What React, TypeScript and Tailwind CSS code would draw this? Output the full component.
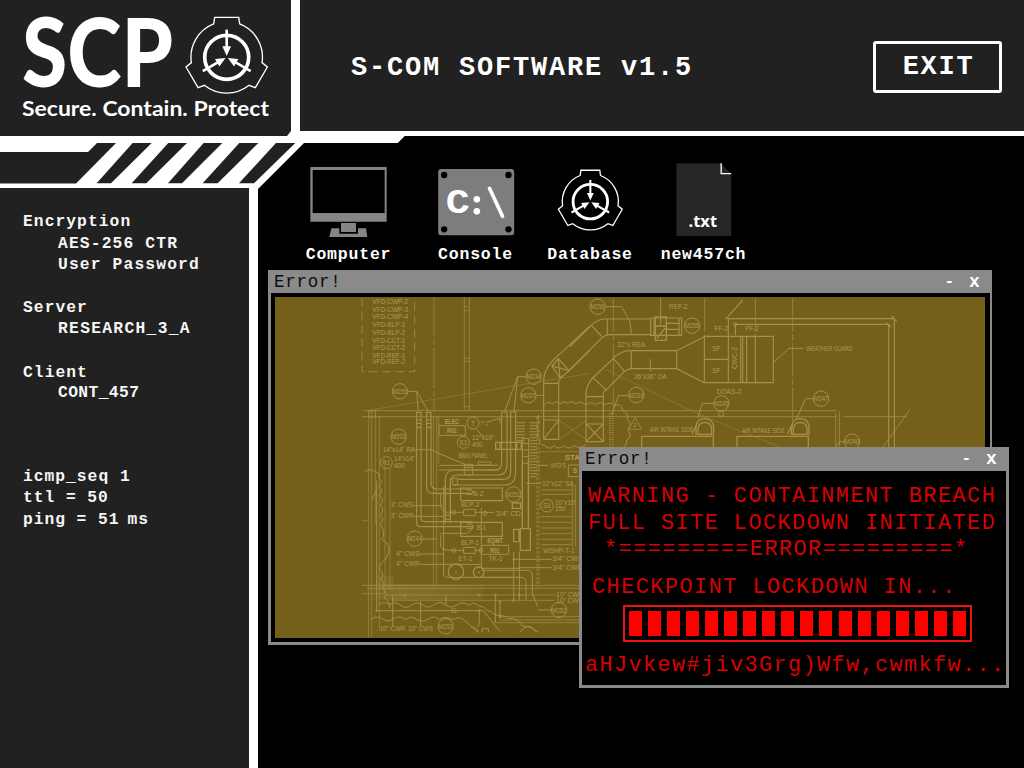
import React from "react";

const MONO = "font-['Liberation_Mono','Courier_New',monospace]";

function Emblem({ thin = 4 }: { thin?: number }) {
  return (
    <g fill="none" stroke="#fff">
      <path
        strokeWidth={thin}
        d="M-36-120L36-120L39-100A107 107 0 0 1 106 16L122 29L86 91L67 84A107 107 0 0 1-67 84L-86 91L-122 29L-106 16A107 107 0 0 1-39-100Z"
      />
      <circle r="66" strokeWidth="11" />
      {[0, 120, 240].map((a) => (
        <g key={a} transform={`rotate(${a})`}>
          <path d="M0-83V-28" strokeWidth="8" />
          <path d="M-13-33H13L0-4Z" fill="#fff" stroke="none" />
        </g>
      ))}
    </g>
  );
}

function Logo() {
  return (
    <svg className="block h-[136px] w-[291px]" viewBox="0 0 291 136" fill="#fff">
      <text x="22" y="87" fontFamily="Lato, sans-serif" fontWeight="900" fontSize="95" textLength="151" lengthAdjust="spacingAndGlyphs">
        SCP
      </text>
      <text x="22" y="115.5" fontFamily="Lato, sans-serif" fontWeight="700" fontSize="21" textLength="247" lengthAdjust="spacingAndGlyphs">
        Secure. Contain. Protect
      </text>
      <g transform="translate(226.7 57.3) scale(.3333)">
        <Emblem />
      </g>
    </svg>
  );
}

function StripeBand() {
  return (
    <svg className="pointer-events-none absolute left-0 top-[131px] h-[64px] w-[410px]" viewBox="0 131 410 64">
      <path fill="#fff" d="M0 136H287L291 131H410L398 143H304L258 189V195H249V188H0Z" />
      <path fill="#000" d="M410 136H405L398 143H410Z" />
      <path fill="#212121" d="M0 152H88L97 143H116L76 183.5H0Z" />
      <g fill="#212121" transform="scale(.3333)">
        <path d="M398 429H455L333 550H290Z" />
        <path d="M505 429H561L439 550H395Z" />
        <path d="M611 429H667L546 550H504Z" />
        <path d="M718 429H775L653 550H608Z" />
        <path d="M828 429H886L762 550H717Z" />
      </g>
    </svg>
  );
}

type TP = { x: number; y: number; s?: number; w?: number; children: React.ReactNode; b?: boolean; r?: number };
function T({ x, y, s = 21, w, children, b, r }: TP) {
  return (
    <text
      x={x}
      y={y}
      fontSize={s}
      textLength={w}
      lengthAdjust="spacingAndGlyphs"
      fontWeight={b ? 700 : 400}
      fill="#b29b52"
      stroke="none"
      transform={r ? `rotate(${r} ${x} ${y})` : undefined}
    >
      {children}
    </text>
  );
}

function Bubble({ x, y, t, r = 23 }: { x: number; y: number; t: string; r?: number }) {
  const w = t.length > 2 ? 42 : t.length * 12;
  return (
    <g>
      <circle cx={x} cy={y} r={r} />
      <T x={x - w / 2} y={y + 8} w={w}>{t}</T>
    </g>
  );
}

const vfd = ["VFD-CWP-2", "VFD-CWP-3", "VFD-CWP-4", "VFD-BLP-1", "VFD-BLP-2", "VFD-CCT-1", "VFD-CCT-2", "VFD-REF-1", "VFD-REF-2"];
const vfdY = [43, 66, 88, 110, 136, 158, 181, 203, 223];

function Blueprint() {
  return (
    <svg
      className="block h-[341px] w-[710px] bg-[#74601b]"
      viewBox="275 297 710 341"
      fill="none"
      stroke="#a68f46"
      strokeWidth="3"
      fontFamily="'Liberation Sans', Arial, sans-serif"
    >
      <defs>
        <linearGradient id="haze">
          <stop offset="0" stopColor="#a68f46" stopOpacity="0" />
          <stop offset=".3" stopColor="#a68f46" stopOpacity=".35" />
          <stop offset="1" stopColor="#a68f46" stopOpacity=".12" />
        </linearGradient>
      </defs>

      <g transform="translate(270 290) scale(.33333)">
        {vfd.map((v, i) => (
          <T key={v} x={307} y={vfdY[i]} w={v.includes("CWP") ? 107 : 99}>{v}</T>
        ))}
        <path strokeDasharray="26 14" opacity=".8" d="M276 25V245H434V25" />
        <path strokeDasharray="120 8 18 8" opacity=".7" d="M492 20V365" />
        <path opacity=".7" d="M583 20V360M598 20V360M583 50H598M583 62H598M583 205H598M583 214H598M583 350H598" />
        <path opacity=".45" d="M300 360L960 250M1010 240L1280 370L1600 500" />
        <Bubble x={390} y={304} t="M235" />
        <path d="M413 304H440L445 362M440 304L474 362" />
        <Bubble x={791} y={260} t="M234" />
        <path d="M768 260H743L704 365M743 260L732 365" />
        <Bubble x={775} y={316} t="M237" />
        <path d="M798 316H820" />
        <path strokeWidth="4" opacity=".65" d="M280 362H1700M275 380H1700" />
        <path opacity=".6" d="M296 360V1070M305 360V1040M316 362V700M328 380V1020M296 362H316V382H296Z" />
        <path strokeWidth="3.5" d="M440 365V700Q440 710 452 710H610M453 365V685Q455 695 466 695H605M470 365V590Q470 610 490 610H605M483 365V580Q485 597 500 597H605M440 367H453M470 367H483M440 390H453M440 400H453M440 412H453M470 390H483M470 400H483M470 412H483" />
        <path opacity=".65" d="M490 380V890M500 380V890M506 380V520" />
        <path strokeWidth="3.5" d="M695 366H711V525Q710 555 685 555H560Q541 557 541 580V690M722 366H737V550Q735 585 705 585H550M695 366V520Q694 540 675 540H550Q526 543 526 570V700M722 366V545Q722 568 700 568H562" />
        <T x={524} y={402} w={43} b>ELEC</T>
        <path d="M507 407H586V436H507Z" />
        <T x={531} y={428} w={29} b>R02</T>
        <Bubble x={609} y={399} t="T" r={18} />
        <T x={632} y={408} w={28}>7'-1"</T>
        <path d="M618 416L642 442M655 395L690 385V400" />
        <Bubble x={386} y={440} t="M203" />
        <T x={338} y={486} w={98}>14"x14" RA</T>
        <path d="M436 479H480L585 523" />
        <Bubble x={349} y={518} t="R1" r={18} />
        <T x={372} y={513} w={63}>14"x14"</T>
        <T x={372} y={533} w={33}>400</T>
        <Bubble x={580} y={457} t="S1" r={18} />
        <T x={606} y={450} w={67}>12"x10"</T>
        <T x={606} y={472} w={31}>400</T>
        <T x={566} y={503} w={88}>BMS PANEL</T>
        <path d="M625 516H662V525H625ZM507 526H685M507 540H685M583 523H608V555H583ZM583 532H608" />
        <path strokeWidth="4" d="M677 457H754V478H677ZM690 457V478M740 457V478" />
        <path d="M757 446H776V700M757 446V700M757 460H776M757 480H776M757 500H776M757 520H776" />
        <path strokeWidth="26" strokeDasharray="3 6" d="M752 397V455" />
        <path strokeWidth="22" strokeDasharray="3 6" d="M790 397V565" />
        <path strokeDasharray="8 5" opacity=".8" d="M801 380V890M807 380V890" />
        <path strokeWidth="3.5" d="M821 448V270Q823 238 848 212L960 108M866 448V275Q868 266 898 242L960 180M821 448H866M821 280H866M821 390H866M821 448L866 390M846 228L865 206L898 242L870 264ZM846 228L898 242M865 206L870 264" />
        <path strokeWidth="3" d="M823 345q12-14 24-3q12-12 24 0q12-12 22-2q13-10 25 2q12-12 30 3q14-14 28 0q16-14 30 0q16-12 28 2q20-10 24 16q18 4 14 26q16 14 2 30q14 22-4 32q2 20-22 28M806 375q-8 12 2 22q-14 14 0 25q-12 14 2 26q-6 16 14 19q14 15 28 0q16 14 30 0q16 14 30 0q20 12 36-4" />
        <path opacity=".55" d="M866 390L950 450M866 450L950 390M806 485H930M806 515V545" />
        <T x={884} y={510} s={24} w={70} b>STAIR</T>
        <T x={841} y={534} w={47}>VFD'S</T>
        <path d="M808 526H835M895 525H940V560H895Z" />
        <T x={908} y={550} b>S</T>
      </g>

      <g transform="translate(270 460) scale(.33333)">
        <path d="M285 35q15-12 28 0q18 2 14 20q14 12 0 24q14 12 2 28q16 12 2 28q14 14 0 30q14 14 0 28q18 28 4 45q40 20 10 62q-20 14-16 30q16 10 4 28q16 12 4 28q18 14 4 26q20 10 18 34M320 62V452M305 120L320 90M320 452H640" />
        <path opacity=".6" d="M345 0V400M360 20V390M276 182H294" />
        <T x={362} y={140} w={68}>3" CWS</T>
        <T x={362} y={174} w={70}>3" CWR</T>
        <T x={379} y={288} w={70}>4" CWS</T>
        <T x={379} y={319} w={70}>4" CWR</T>
        <path d="M430 137H517M433 169H520M448 282H520M450 313H632M458 237H500" />
        <Bubble x={434} y={236} t="M244" />
        <path d="M572 84H697V122H572ZM572 187H697V229H572Z" strokeWidth="3.5" />
        <path d="M590 90H605L609 96L605 103H590M590 192H605L609 199L605 206H590" />
        <T x={608} y={108} w={33}>B-2</T>
        <T x={620} y={209} w={28}>B-1</T>
        <T x={573} y={142} w={55}>BLP-2</T>
        <T x={573} y={255} w={54}>BLP-1</T>
        <path d="M581 148H616V167H581ZM581 262H616V280H581ZM545 157H581M616 157H672M545 271H581M616 271H633M634 145V325H750" />
        <circle cx="551" cy="157" r="6" /><circle cx="551" cy="271" r="6" />
        <circle cx="633" cy="271" r="6" /><circle cx="645" cy="160" r="6" />
        <path d="M521 80V345Q522 352 530 352H730M512 100V140Q515 160 545 157M512 225V260Q515 271 545 271M541 55V190M526 55V190M526 165H541M526 178H541M548 55H562V75H548ZM509 220H590Q600 215 610 203" />
        <T x={652} y={249} w={47} b>EQMT</T>
        <path d="M634 256H716V283H634Z" />
        <T x={661} y={278} w={28} b>R01</T>
        <T x={565} y={303} w={42}>ET-1</T>
        <T x={656} y={303} w={42}>TK-1</T>
        <circle cx="558" cy="335" r="23" strokeWidth="4" /><circle cx="558" cy="337" r="2" />
        <circle cx="626" cy="337" r="16" strokeWidth="4" /><circle cx="626" cy="337" r="2" />
        <Bubble x={730} y={103} t="M251" />
        <path strokeWidth="4" d="M727 129H752V145H727ZM731 208H747V245H731ZM751 206H781V271H751ZM757 0V206M775 0V206" />
        <T x={677} y={168} w={75}>3/4" CD</T>
        <path d="M768 70H815M731 275V422M748 275V422M634 331H775Q787 334 787 345V400L803 440M640 352H755Q768 355 768 370V422" />
        <T x={817} y={77} w={94}>12"x12" SA</T>
        <Bubble x={831} y={137} t="S1" r={19} />
        <T x={855} y={136} w={65}>10"x10"</T>
        <T x={855} y={154} w={32}>250</T>
        <path opacity=".75" d="M813 90H905M813 103H905M813 170H905M813 187H905M813 204H905M813 221H905M813 238H905M813 254H905M907 75V260M916 75V260" />
        <T x={820} y={278} w={94}>WSHP-T-1</T>
        <T x={847} y={303} w={90}>3/4" CWS</T>
        <T x={847} y={330} w={90}>3/4" CWR</T>
        <path d="M731 298H845M750 323H845" />
        <rect x="280" y="372" width="360" height="48" fill="url(#haze)" stroke="none" />
        <rect x="322" y="348" width="50" height="42" fill="#a68f46" opacity=".22" stroke="none" />
        <path opacity=".7" d="M275 376H930M290 385H930M345 405H860M365 421H855M275 401H345M690 470H930M690 480H930M672 488H930" />
        <path d="M325 435q18-14 34 0q14-14 30 0q20 14 36 0q14-12 34 0q16 14 34-2q20-12 34 2q18 12 34 0q18-14 36 2q14-14 28 0q18 2 28 15q14 0 24 15q22-6 38 10q26-8 40 20q26 0 48 18M305 477q18-12 34 0q14 12 34-2q20-10 34 4q16-14 34 0q16 10 34-2q18-12 34 2q16-14 38 0q20-12 34 0q16 12 24 22q14-2 20 16M368 405V500M452 425V500M528 405V435M628 450V485L625 500M676 405V488M690 425V475M640 452L690 515" />
        <T x={542} y={458} w={20}>GL</T>
        <T x={329} y={512} w={77}>10" CWR</T>
        <T x={414} y={512} w={75}>10" CWS</T>
        <Bubble x={527} y={499} t="M252" />
        <path d="M637 517V506H655V517M605 500L622 517M750 517Q775 480 800 517M803 450H845" />
        <Bubble x={867} y={450} t="M252" />
        <T x={859} y={411} w={80}>10" CWR</T>
        <T x={859} y={428} w={80}>10" CWS</T>
        {[[731, 298], [748, 323], [731, 422], [748, 405], [676, 405], [690, 425], [320, 452], [628, 452], [690, 470], [405, 405], [628, 405]].map(([x, y]) => (
          <circle key={`${x}-${y}`} cx={x} cy={y} r="3" />
        ))}
      </g>

      <g transform="translate(570 290) scale(.33333)">
        <Bubble x={83} y={50} t="M256" />
        <path d="M106 50H155L180 95L184 133M272 25V105" />
        <T x={297} y={58} w={56}>REF-2</T>
        <Bubble x={366} y={107} t="M255" />
        <path strokeWidth="3.5" d="M0 170L64 106Q82 87 105 87H242M0 238L94 145Q106 134 120 134H242M112 87V134M64 106L96 140M242 84H335V136H242ZM252 84V136M327 84V136M290 100H327M290 118H327" />
        <path strokeWidth="4" d="M256 81H289V151H256ZM256 108H289M260 145L286 114" />
        <T x={142} y={170} w={84}>32"x REA</T>
        <path strokeWidth="3.5" d="M48 455V315Q48 285 68 264L130 205Q152 183 178 182H320L403 140M100 455V310Q101 304 110 298L164 244Q174 236 186 236H320L403 278M184 182V236M320 182V236M130 205L164 244M70 264L110 301M48 320H100M48 402H100M48 455H100M48 402L100 455M100 402L48 455" />
        <path d="M241 207V244" />
        <T x={192} y={266} w={98}>36"x36" OA</T>
        <path strokeWidth="3.5" d="M403 139H610V278H403ZM475 139V278M403 208H475M512 139V278M518 139V278M530 139V278M556 139V278" />
        <T x={427} y={183} w={24}>SF</T>
        <T x={427} y={250} w={24}>SF</T>
        <T x={500} y={237} w={66} r={-90}>CWC-2</T>
        <T x={433} y={123} w={41}>FF-2</T>
        <T x={525} y={123} w={41}>PF-2</T>
        <path strokeWidth="3.5" d="M475 139V86H973V480M496 136V103H956V480M467 88L518 30M965 78L980 95M948 98L964 110" />
        <circle cx="496" cy="103" r="5" />
        <path strokeDasharray="100 8 18 8" opacity=".7" d="M130 25V365M404 25V139M556 25V139M668 25V440" />
        <path d="M611 217L657 175H700" />
        <T x={709} y={182} w={139}>WEATHER GUARD</T>
        <T x={440} y={311} w={74}>DOAS-2</T>
        <Bubble x={199} y={315} t="M239" />
        <path d="M176 317H145L125 375" />
        <Bubble x={454} y={340} t="M245" />
        <path d="M431 340H397L383 385" />
        <Bubble x={753} y={326} t="M247" />
        <path d="M730 326H707L680 385" />
        <circle cx="453" cy="371" r="8" />
        <path strokeWidth="6" strokeDasharray="3 4" opacity=".8" d="M120 370V470M128 370V470" />
        <path opacity=".8" d="M195 383L215 418H176ZM797 370V470M808 365V470M820 380H1010M1020 358L940 470" />
        <T x={190} y={412} s={18} w={10}>2</T>
        <T x={239} y={427} w={132}>AIR INTAKE SIDE</T>
        <T x={516} y={429} w={128}>AIR INTAKE SIDE</T>
        <path strokeWidth="4" d="M215 480V439H430V480M501 480V439H715V480M378 435V410Q380 386 404 386Q430 387 431 413V435M384 433V417Q386 397 404 397Q424 398 425 417V433ZM664 435V410Q668 386 691 386Q716 387 717 413V435M670 433V417Q672 397 691 397Q710 398 711 417V433ZM378 408L366 432M664 408L652 432" />
        <Bubble x={846} y={455} t="M240" />
        <path d="M823 455H808L798 470" />
      </g>
    </svg>
  );
}

function TitleBar({ className }: { className: string }) {
  return (
    <div className={`flex items-center bg-[#8a8a8a] text-[#0c0c0c] ${className}`}>
      <span className="flex-1 text-[17.5px] leading-[24px] tracking-[0.75px]">Error!</span>
      <span className="mr-[15px] text-[16px] font-bold leading-[20px] text-white">-</span>
      <span className="w-[12px] text-[18px] font-bold leading-[20px] text-white">x</span>
    </div>
  );
}

function DesktopIcon({ label, x, className = "", children }: { label: string; x: number; className?: string; children: React.ReactNode }) {
  return (
    <div className={`flex w-[100px] flex-col items-center ${className}`}>
      <svg className="block h-[84px] w-[100px]" viewBox={`${x} 160 100 84`}>
        <g transform="translate(290 130) scale(.33333)">{children}</g>
      </svg>
      <span className="whitespace-nowrap text-[16.5px] font-bold leading-[22px] tracking-[0.8px] text-white">{label}</span>
    </div>
  );
}

const blocks = Array.from({ length: 18 }, (_, i) => i);

export default function App() {
  return (
    <div className={`relative h-[768px] w-[1024px] overflow-hidden bg-black ${MONO}`}>
      <header className="flex h-[136px] gap-[9px] bg-white text-white">
        <div className="w-[291px] bg-[#212121]">
          <Logo />
        </div>
        <div className="flex h-[131px] flex-1 items-start justify-between bg-[#212121] pl-[51px] pr-[22px]">
          <h1 className="mt-[50px] whitespace-pre text-[27px] font-bold leading-[36px] tracking-[1.8px]">S-COM SOFTWARE v1.5</h1>
          <button className="mt-[41px] h-[52px] w-[129px] rounded-[3px] border-[3px] border-white pl-[2px] text-[27px] font-bold leading-[44px] tracking-[1.7px]">
            EXIT
          </button>
        </div>
      </header>

      <div className="flex h-[632px]">
        <aside className="flex w-[258px] flex-col border-r-[9px] border-white bg-[#212121] pl-[23px] pt-[75px] text-[16.3px] font-bold leading-[21.5px] tracking-[1.05px] text-[#f6f6f6]">
          <div>Encryption</div>
          <div className="pl-[35px] tracking-[1.15px]">AES-256 CTR</div>
          <div className="pl-[35px] tracking-[1.15px]">User Password</div>
          <div className="mt-[21.5px]">Server</div>
          <div className="-mt-[1px] pl-[35px] tracking-[1.3px]">RESEARCH_3_A</div>
          <div className="mt-[22.5px]">Client</div>
          <div className="-mt-[1px] pl-[35px] tracking-[0.4px]">CONT_457</div>
          <div className="mt-[62px] tracking-[1px]">icmp_seq 1</div>
          <div className="tracking-[0.95px]">ttl = 50</div>
          <div className="tracking-[0.95px]">
            ping = 51<span className="ml-[8px]">ms</span>
          </div>
        </aside>

        <main className="relative flex-1">
          <div className="flex pl-[40.5px] pt-[24px]">
            <DesktopIcon label="Computer" x={299}>
              <path fill="#858585" fillRule="evenodd" d="M61 111H290V275H61ZM68 120V249H284V120Z" />
              <path fill="#858585" d="M153 279H198V306H153ZM124 295H148V311H204V295H228L232 321H118Z" />
            </DesktopIcon>
            <DesktopIcon label="Console" x={425.5} className="ml-[27px]">
              <rect x="443" y="117" width="228" height="199" rx="9" fill="#7d7d7d" />
              {[[461, 135], [654, 135], [461, 298], [654, 298]].map(([cx, cy]) => (
                <circle key={`${cx}-${cy}`} cx={cx} cy={cy} r="9.5" fill="#000" />
              ))}
              <text x="466" y="250" fontSize="104" fontWeight="700" fill="#fff" textLength="72" lengthAdjust="spacingAndGlyphs">C</text>
              <circle cx="559" cy="208" r="10" fill="#fff" />
              <circle cx="559" cy="244" r="10" fill="#fff" />
              <path d="M597 175L636 259" stroke="#fff" strokeWidth="11" strokeLinecap="round" />
            </DesktopIcon>
            <DesktopIcon label="Database" x={540} className="ml-[14.5px]">
              <g transform="translate(901 215) scale(.785)">
                <Emblem thin={5} />
              </g>
            </DesktopIcon>
            <DesktopIcon label="new457ch" x={653.5} className="ml-[13.5px]">
              <path fill="#262626" d="M1158 100H1291L1322 131V318H1158Z" />
              <path d="M1292 100V131H1322" fill="none" stroke="#fff" strokeWidth="4" />
              <text x="1194" y="291" fontSize="46" fontWeight="700" fontFamily="'Noto Sans', sans-serif" fill="#fff" textLength="86" lengthAdjust="spacingAndGlyphs">.txt</text>
            </DesktopIcon>
          </div>

          <section className="absolute left-[10px] top-[134px] h-[375px] w-[724px] border-[3px] border-t-0 border-r-[2px] border-[#8a8a8a] bg-black">
            <TitleBar className="h-[23px] pl-[3px] pr-[9px]" />
            <div className="pl-[4px] pt-[4px]">
              <Blueprint />
            </div>
          </section>

          <section className="absolute left-[321px] top-[311px] h-[241px] w-[430px] border-[3px] border-t-0 border-[#8a8a8a] bg-black">
            <TitleBar className="h-[24px] pl-[3px] pr-[8px]" />
            <div className="whitespace-pre pt-[11.7px] text-[21.8px] leading-[28px] tracking-[1.5px] text-[#d80000]">
              <div className="h-[27.5px] pl-[6px]">WARNING - CONTAINMENT BREACH</div>
              <div className="h-[26px] pl-[6px]">FULL SITE LOCKDOWN INITIATED</div>
              <div className="h-[38px] pl-[22px]">*=========ERROR=========*</div>
              <div className="h-[30.8px] pl-[10px]">CHECKPOINT LOCKDOWN IN...</div>
              <div className="ml-[41px] flex h-[37px] w-[349px] justify-between border-2 border-[#f01010] px-[4px] py-[4px]">
                {blocks.map((b) => (
                  <span key={b} className="h-[25px] w-[13px] bg-[#ff0000]" />
                ))}
              </div>
              <div className="mt-[10px] pl-[3px] tracking-[1.42px]">aHJvkew#jiv3Grg)Wfw,cwmkfw...</div>
            </div>
          </section>
        </main>
      </div>

      <StripeBand />
    </div>
  );
}
